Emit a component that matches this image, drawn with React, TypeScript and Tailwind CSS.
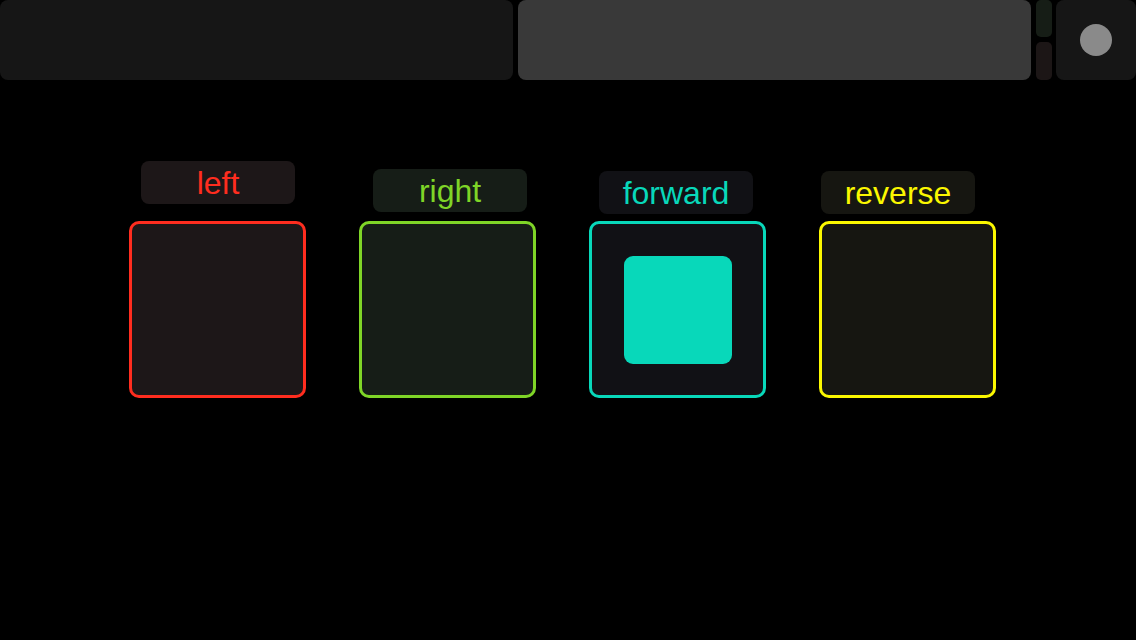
import React from "react";

type Pad = {
  label: string;
  text: string;
  border: string;
  bg: string;
  labelPos: string;
  active?: boolean;
};

const pads: Pad[] = [
  {
    label: "left",
    text: "text-[#ff2d1f]",
    border: "border-[#ff2d1f]",
    bg: "bg-[#1d1718]",
    labelPos: "ml-[12px] mt-[81px] mb-[17px]",
  },
  {
    label: "right",
    text: "text-[#7fd527]",
    border: "border-[#7fd527]",
    bg: "bg-[#161d17]",
    labelPos: "ml-[14px] mt-[89px] mb-[9px]",
  },
  {
    label: "forward",
    text: "text-[#08d8ba]",
    border: "border-[#08d8ba]",
    bg: "bg-[#111115]",
    labelPos: "ml-[10px] mt-[91px] mb-[7px]",
    active: true,
  },
  {
    label: "reverse",
    text: "text-[#fbf700]",
    border: "border-[#fbf700]",
    bg: "bg-[#161611]",
    labelPos: "ml-[2px] mt-[91px] mb-[7px]",
  },
];

export default function App() {
  return (
    <div
      className="w-[1136px] h-[640px] bg-black overflow-hidden"
      style={{ fontFamily: '"Liberation Sans", Arial, sans-serif' }}
    >
      <div className="flex h-[80px]">
        <div className="w-[513px] h-full rounded-[8px] bg-[#161616]" />
        <div className="ml-[5px] w-[513px] h-full rounded-[8px] bg-[#393939]" />
        <div className="ml-[5px] w-[16px] h-full flex flex-col gap-[5px]">
          <div className="h-[37px] rounded-[5px] bg-[#161d16]" />
          <div className="flex-1 rounded-[5px] bg-[#1c1616]" />
        </div>
        <div className="ml-[4px] w-[80px] h-full rounded-[8px] bg-[#161616] flex items-center justify-center">
          <div className="w-[32px] h-[32px] rounded-full bg-[#8a8a8a]" />
        </div>
      </div>

      <div className="flex pl-[129px] gap-[53px]">
        {pads.map((p) => (
          <div key={p.label} className="flex flex-col w-[177px]">
            <div
              className={`${p.labelPos} w-[154px] h-[43px] rounded-[8px] ${p.bg} ${p.text} flex items-center justify-center text-[32px] leading-none`}
            >
              {p.label}
            </div>
            <div
              className={`w-[177px] h-[177px] rounded-[10px] border-[3px] ${p.border} ${p.bg} flex items-center justify-center`}
            >
              {p.active && (
                <div className="w-[108px] h-[108px] rounded-[9px] bg-[#08d8ba]" />
              )}
            </div>
          </div>
        ))}
      </div>
    </div>
  );
}
